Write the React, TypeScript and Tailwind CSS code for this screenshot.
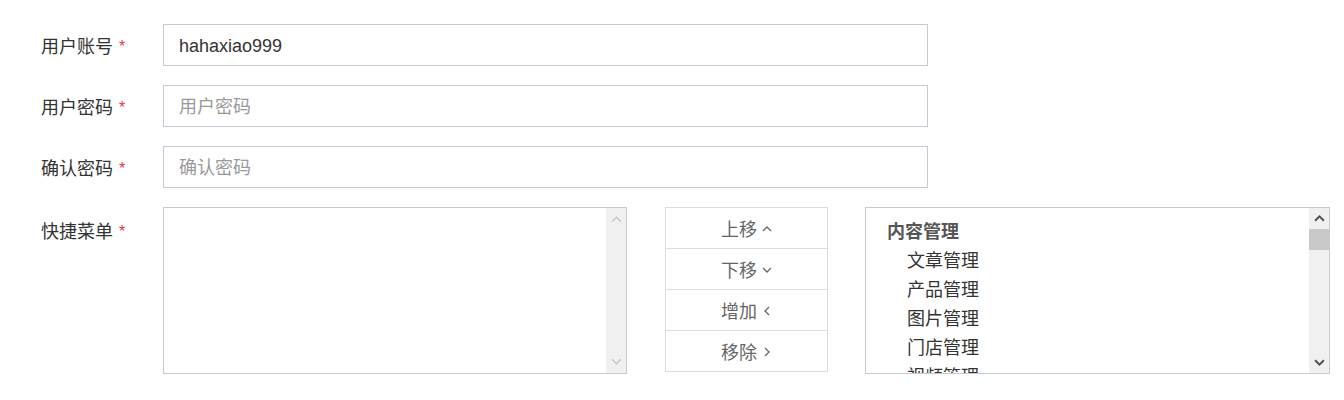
import React from "react";

const FONT = { fontFamily: '"Liberation Sans", "Noto Sans CJK SC", sans-serif' };

function Chevron({ dir, className, size = 10, stroke = 1.4 }: { dir: "up" | "down" | "left" | "right"; className?: string; size?: number; stroke?: number }) {
  const d =
    dir === "up"
      ? "M1 7 L5 3 L9 7"
      : dir === "down"
      ? "M1 3 L5 7 L9 3"
      : dir === "left"
      ? "M7 1 L3 5 L7 9"
      : "M3 1 L7 5 L3 9";
  return (
    <svg width={size} height={size} viewBox="0 0 10 10" className={className}>
      <path d={d} fill="none" stroke="currentColor" strokeWidth={stroke} />
    </svg>
  );
}

function Label({ text, extra = false }: { text: string; extra?: boolean }) {
  return (
    <div className={`w-[122px] h-[42px] flex items-center shrink-0 text-[18px] text-[#333] ${extra ? "pt-[8px]" : "pt-[4px]"}`}>
      <span>{text}</span>
      <span className="ml-[6px] text-[16px] text-[#e4393c]">*</span>
    </div>
  );
}

function Field({ label, value, placeholder }: { label: string; value?: string; placeholder?: string }) {
  return (
    <div className="flex">
      <Label text={label} />
      <div className="w-[765px] h-[42px] border border-[#c3cbd6] flex items-center px-[15px] pt-[3px] text-[18px]">
        {value ? <span className="text-[#333]">{value}</span> : <span className="text-[#999]">{placeholder}</span>}
      </div>
    </div>
  );
}

const buttons: { text: string; dir: "up" | "down" | "left" | "right" }[] = [
  { text: "上移", dir: "up" },
  { text: "下移", dir: "down" },
  { text: "增加", dir: "left" },
  { text: "移除", dir: "right" },
];

const items = ["文章管理", "产品管理", "图片管理", "门店管理", "视频管理"];

export default function App() {
  return (
    <div className="w-[1344px] h-[400px] bg-white pt-[24px] pl-[41px]" style={FONT}>
      <div className="flex flex-col gap-[19px]">
        <Field label="用户账号" value="hahaxiao999" />
        <Field label="用户密码" placeholder="用户密码" />
        <Field label="确认密码" placeholder="确认密码" />
        <div className="flex">
          <Label text="快捷菜单" extra />
          <div className="w-[464px] h-[167px] border border-[#c3cbd6] flex justify-end">
            <div className="w-[20px] h-full bg-[#f0f0f0] flex flex-col items-center justify-between py-[6px] text-[#c6c6c6]">
              <Chevron dir="up" size={11} stroke={1.3} />
              <Chevron dir="down" size={11} stroke={1.3} />
            </div>
          </div>
          <div className="ml-[38px] w-[163px] h-[165px] border border-[#dcdcdc] flex flex-col">
            {buttons.map((b, i) => (
              <div
                key={b.text}
                className={`flex-1 flex items-center justify-center gap-[5px] pt-[4px] text-[18px] text-[#666] ${i > 0 ? "border-t border-[#dcdcdc]" : ""}`}
              >
                <span>{b.text}</span>
                <Chevron dir={b.dir} size={10} stroke={1.3} className="text-[#666] mt-[-2px]" />
              </div>
            ))}
          </div>
          <div className="ml-[37px] w-[465px] h-[167px] border border-[#c3cbd6] flex overflow-hidden">
            <div className="flex-1 pl-[21px] pt-[10px] text-[18px] leading-[29px] overflow-hidden">
              <div className="font-bold text-[#555]">内容管理</div>
              {items.map((it) => (
                <div key={it} className="pl-[20px] text-[#333]">
                  {it}
                </div>
              ))}
            </div>
            <div className="w-[20px] h-full bg-[#f0f0f0] flex flex-col items-center">
              <div className="h-[21px] flex items-center justify-center text-[#505050]">
                <Chevron dir="up" size={11} stroke={1.8} />
              </div>
              <div className="w-full h-[21px] bg-[#c8c8c8]" />
              <div className="flex-1" />
              <div className="h-[21px] flex items-center justify-center text-[#505050]">
                <Chevron dir="down" size={11} stroke={1.8} />
              </div>
            </div>
          </div>
        </div>
      </div>
    </div>
  );
}
